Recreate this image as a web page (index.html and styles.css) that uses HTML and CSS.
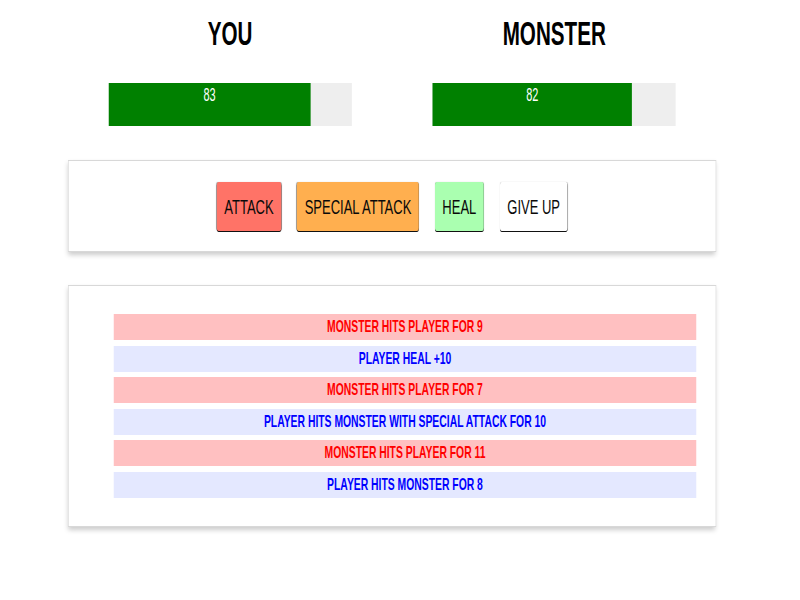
FILE: index.html
```html
<!DOCTYPE html>
<html lang="en">
<head>
<meta charset="utf-8">
<title>Monster Slayer</title>
<link rel="stylesheet" href="styles.css">
</head>
<body>
<div class="viewport">
<div class="page">
  <section class="stats">
    <div class="fighter">
      <h1 class="fighter-name">YOU</h1>
      <div class="healthbar"><div class="health" style="width:83%">83</div></div>
    </div>
    <div class="fighter">
      <h1 class="fighter-name">MONSTER</h1>
      <div class="healthbar"><div class="health" style="width:82%">82</div></div>
    </div>
  </section>
  <section class="card controls">
    <button class="btn btn-attack">ATTACK</button>
    <button class="btn btn-special">SPECIAL ATTACK</button>
    <button class="btn btn-heal">HEAL</button>
    <button class="btn btn-giveup">GIVE UP</button>
  </section>
  <section class="card log">
    <ul class="log-list">
      <li class="log-item monster-turn">Monster hits player for 9</li>
      <li class="log-item player-turn">Player heal +10</li>
      <li class="log-item monster-turn">Monster hits player for 7</li>
      <li class="log-item player-turn">Player hits monster with special attack for 10</li>
      <li class="log-item monster-turn">Monster hits player for 11</li>
      <li class="log-item player-turn">Player hits monster for 8</li>
    </ul>
  </section>
</div>
</div>
</body>
</html>
```
FILE: styles.css
```css
html, body {
  margin: 0;
  overflow: hidden;
  background: #fff;
}
body {
  font-family: "Liberation Sans", Arial, sans-serif;
  color: #0a0a0a;
}
.viewport {
  width: 800px;
  height: 600px;
  overflow: hidden;
}
.page {
  width: 1255px;
  padding-top: 14px;
  transform: scaleX(0.625);
  transform-origin: 0 0;
}
.stats {
  width: 1037px;
  margin: 0 auto;
  display: flex;
}
.fighter {
  flex: 1;
  text-align: center;
}
.fighter-name {
  margin: 0;
  font-size: 33px;
  line-height: 40px;
  font-weight: bold;
  color: #000;
}
.healthbar {
  width: 75%;
  height: 43px;
  margin: 29px auto 0;
  background: #eee;
}
.health {
  height: 100%;
  background: #008000;
  color: #fff;
  font-size: 17.5px;
  line-height: 25px;
  text-align: center;
}
.card {
  box-sizing: border-box;
  width: 1037px;
  margin: 34px auto 0;
  border: 1px solid #d8d8d8;
  box-shadow: 0 3px 6px #ccc;
  background: #fff;
}
.controls {
  display: flex;
  justify-content: center;
  gap: 25.6px;
  padding: 21px 0 20px;
}
.btn {
  font-family: inherit;
  font-size: 20.8px;
  line-height: 25px;
  padding: 12px;
  border: none;
  border-radius: 3px;
  box-shadow: 0 1px 0 #111, 0 0 1px rgba(0, 0, 0, 0.35);
  color: #0a0a0a;
}
.btn-attack { background: #ff7367; }
.btn-special { background: #ffaf4f; }
.btn-heal { background: #aaffb0; }
.btn-giveup { background: #fff; }
.log {
  margin-top: 33px;
  padding: 28px 31px 28px 72px;
}
.log-list {
  list-style: none;
  margin: 0;
  padding: 0;
  display: flex;
  flex-direction: column;
  gap: 5.6px;
}
.log-item {
  font-size: 16.6px;
  line-height: 26px;
  font-weight: bold;
  text-align: center;
  text-transform: uppercase;
}
.monster-turn {
  color: #f00;
  background: #ffc0c1;
}
.player-turn {
  color: #00f;
  background: #e4e8ff;
}
```
